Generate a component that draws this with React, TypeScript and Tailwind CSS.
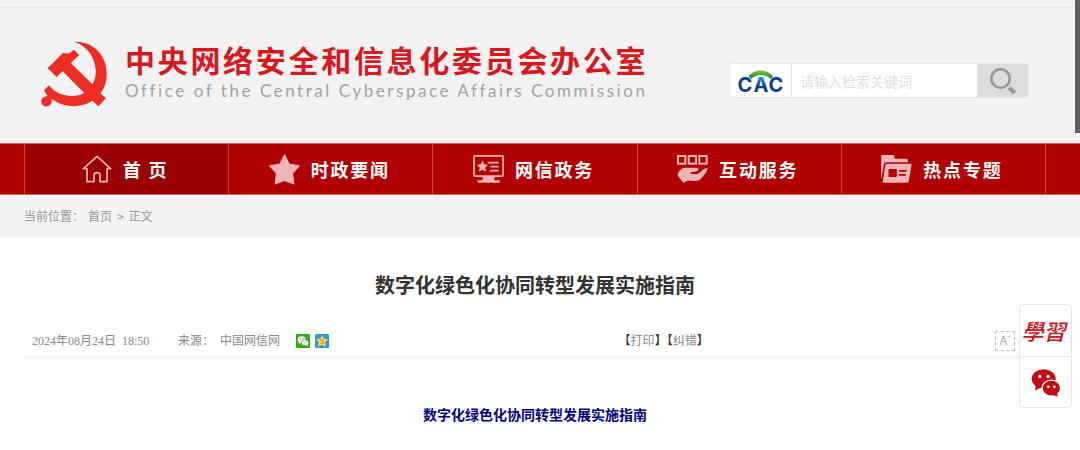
import React from 'react'

const navItems = [
  { label: '首 页', icon: HomeIcon, active: true },
  { label: '时政要闻', icon: StarIcon },
  { label: '网信政务', icon: ScreenIcon },
  { label: '互动服务', icon: HandIcon },
  { label: '热点专题', icon: FolderIcon },
]

function Emblem() {
  return (
    <svg viewBox="123 122 199 198" className="h-[66px] w-[66px] shrink-0 fill-[#ee2c24]" aria-hidden="true">
      <path d="M224 124C281 122 321 165 321 220C321 246 313 266 302 279L319 294L296 318L278 302C262 313 242 318 222 318C194 318 172 309 155 296C158 312 148 319 140 319C131 319 124 312 124 303C124 294 132 287 143 288L132 270L147 255C161 274 186 287 214 287C232 287 244 284 254 279L188 212L170 230L143 204L189 158C198 159 206 160 212 156L222 148L238 164L213 188L278 252C286 240 289 226 288 210C286 172 264 138 224 124Z" />
    </svg>
  )
}

function CacLogo() {
  return (
    <svg viewBox="0 0 46 32" className="h-8 w-[46px]" role="img" aria-label="CAC">
      <defs>
        <linearGradient id="roof" x1="0" y1="0" x2="0" y2="1">
          <stop offset="0" stopColor="#9cc52c" />
          <stop offset="0.8" stopColor="#0b9444" />
        </linearGradient>
        <linearGradient id="letter" x1="0" y1="0" x2="0" y2="1">
          <stop offset="0.2" stopColor="#0aa0d8" />
          <stop offset="0.5" stopColor="#0a3f8c" />
        </linearGradient>
      </defs>
      <path d="M10.500 11C16 3.500 29 3.500 35 11L33 14C28 8.500 18 8.500 13 14Z" fill="url(#roof)" />
      <g fontFamily="Inter, sans-serif" fontSize="20" fontWeight="700" textAnchor="middle" fill="#0a3f8c">
        <text x="7" y="27">C</text>
        <text x="23" y="27" fill="url(#letter)">A</text>
        <text x="38" y="27">C</text>
      </g>
    </svg>
  )
}

function SearchIcon() {
  return (
    <svg viewBox="812 203 82 82" className="h-7 w-7 stroke-[#989898]" fill="none" aria-hidden="true">
      <circle cx="846" cy="237" r="27" strokeWidth="8" />
      <path d="M871 264L887 278" strokeWidth="13" />
    </svg>
  )
}

function HomeIcon() {
  return (
    <svg viewBox="0 0 90 84" className="h-7 w-[30px]" fill="none" stroke="currentColor" strokeWidth="5" strokeLinejoin="round" aria-hidden="true">
      <path d="M45 4L4 41H15V80H36V60Q36 53 45 53Q54 53 54 60V80H75V41H86Z" />
    </svg>
  )
}

function StarIcon() {
  return (
    <svg viewBox="0 0 92 92" className="h-[31px] w-[31px]" fill="currentColor" stroke="currentColor" strokeWidth="3" strokeLinejoin="round" aria-hidden="true">
      <path d="M46 2L60 30L90 35L70 57L74 89L46 79L18 89L22 57L2 35L32 30Z" />
    </svg>
  )
}

function ScreenIcon() {
  return (
    <svg viewBox="0 0 92 84" className="h-7 w-[31px]" fill="currentColor" aria-hidden="true">
      <rect x="2.500" y="2.500" width="87" height="61" rx="3" fill="none" stroke="currentColor" strokeWidth="5" />
      <path d="M28 64H64V76H81Q81 83 76 83H16Q12 83 12 76H28Z" />
      <path d="M28 16L33 28L45 29L36 38L39 50L28 44L17 50L20 38L11 29L23 28Z" />
      <path d="M44 23H76M52 35H76M50 47H76" stroke="currentColor" strokeWidth="5" />
    </svg>
  )
}

function HandIcon() {
  return (
    <svg viewBox="0 0 93 84" className="h-7 w-[31px]" fill="currentColor" aria-hidden="true">
      <g fill="none" stroke="currentColor" strokeWidth="6">
        <rect x="3" y="3" width="22" height="23" />
        <rect x="35" y="3" width="22" height="23" />
        <rect x="67" y="3" width="22" height="23" />
      </g>
      <path d="M2 56C6 46 14 39 24 38H58C66 39 67 46 60 49L42 52C38 54 40 57 46 57H61C72 52 78 40 92 39C90 52 80 62 72 71C66 77 56 79 42 77C34 76 28 78 20 84L5 66Q1 61 2 56Z" />
    </svg>
  )
}

function FolderIcon() {
  return (
    <svg viewBox="0 0 92 84" className="h-7 w-[31px]" fill="currentColor" aria-hidden="true">
      <path d="M0 4Q0 0 4 0H35Q39 0 40 4L41 11H76Q80 11 80 15V22H18Q10 22 8 29L0 74Z" />
      <path fillRule="evenodd" d="M20 26H87Q92 26 91 31L83 77Q82 83 76 83H4L12 33Q13 26 20 26ZM25 42Q22 42 22 45V63Q22 66 25 66H44Q47 66 47 63V45Q47 42 44 42ZM54 45V50H76V45ZM53 57V62H74V57Z" />
    </svg>
  )
}

function WechatShareIcon() {
  return (
    <svg viewBox="0 0 42 42" className="h-[14px] w-[14px]" aria-hidden="true">
      <rect width="42" height="42" rx="4" fill="#34a91c" />
      <ellipse cx="17" cy="17" rx="12" ry="10" fill="#fff" />
      <path d="M9 23L8 30L16 26Z" fill="#fff" />
      <ellipse cx="27" cy="26" rx="11" ry="9" fill="#fff" stroke="#34a91c" strokeWidth="2" />
      <path d="M30 33L36 37L35 29Z" fill="#fff" />
      <g fill="#34a91c">
        <circle cx="13" cy="15" r="2" />
        <circle cx="21" cy="15" r="2" />
        <circle cx="24" cy="24" r="1.500" />
        <circle cx="31" cy="24" r="1.500" />
      </g>
    </svg>
  )
}

function QzoneIcon() {
  return (
    <svg viewBox="0 0 42 42" className="h-[14px] w-[14px]" aria-hidden="true">
      <rect width="42" height="42" rx="4" fill="#2f97dc" />
      <path d="M21 3L26 14L39 16L30 25L33 38L21 32L9 38L12 25L3 16L16 14Z" fill="#ffdf4a" />
      <path d="M14 18H27L17 27H29" fill="none" stroke="#d9820f" strokeWidth="3" />
    </svg>
  )
}

function WechatIcon() {
  return (
    <svg viewBox="210 230 90 86" className="h-[29px] w-[30px]" aria-hidden="true">
      <ellipse cx="248" cy="262" rx="36" ry="29" fill="#c40d12" />
      <path d="M224 280L222 297L242 287Z" fill="#c40d12" />
      <ellipse cx="271" cy="290" rx="28" ry="24" fill="#c40d12" stroke="#fff" strokeWidth="4" />
      <path d="M276 311L290 315L289 304Z" fill="#c40d12" />
      <g fill="#fff">
        <circle cx="236" cy="255" r="5" />
        <circle cx="261" cy="255" r="5" />
        <circle cx="262" cy="286" r="4" />
        <circle cx="280" cy="286" r="4" />
      </g>
    </svg>
  )
}

export default function App() {
  return (
    <div className="relative min-h-screen bg-white font-['Noto_Sans_CJK_SC',sans-serif] text-xs text-[#888]">
      <header className="bg-[#f2f2f2]">
        <div className="h-2 border-b border-[#e6e6e6]" />
        <div className="ml-6 mr-[34px] flex h-[135px] items-start justify-between px-[17px] pt-[33px]">
          <a href="#" className="flex gap-[18px]">
            <Emblem />
            <span className="mt-1.5 flex flex-col whitespace-nowrap">
              <span className="text-[30px] leading-6 font-bold tracking-[0.09em] text-[#d7191e]">
                中央网络安全和信息化委员会办公室
              </span>
              <span className="font-[Lato,sans-serif] text-[17px] leading-10 tracking-[0.15em] text-[#a3a3a3]">
                Office of the Central Cyberspace Affairs Commission
              </span>
            </span>
          </a>

          <form className="mt-[22px] flex h-[35px] w-[300px] overflow-hidden rounded-sm border border-[#e6e6e6] bg-white">
            <span className="flex w-[62px] shrink-0 items-center justify-center border-r border-[#e6e6e6]">
              <CacLogo />
            </span>
            <input
              type="text"
              aria-label="请输入检索关键词"
              placeholder="请输入检索关键词"
              className="min-w-0 flex-1 px-2 text-sm text-[#666] outline-none placeholder:text-[#dedede]"
            />
            <button type="button" aria-label="搜索" className="flex w-[51px] items-center justify-center bg-[#dcdcdc]">
              <SearchIcon />
            </button>
          </form>
        </div>
      </header>

      <nav className="border-y border-[#cf6366] bg-[#b00000]">
        <ul className="ml-6 mr-[34px] flex h-[50px] border-r border-[#c84444]">
          {navItems.map(({ label, icon: Icon, active }) => (
            <li key={label} className="flex-1 border-l border-[#c84444]">
              <a
                href="#"
                className={`flex h-full items-center justify-center gap-[11px] pr-[3px] text-[#eeb4b7] ${active ? 'bg-[#9b0000]' : ''}`}
              >
                <Icon />
                <span className="text-lg font-bold tracking-widest whitespace-nowrap text-white">{label}</span>
              </a>
            </li>
          ))}
        </ul>
      </nav>

      <div className="flex h-[42px] items-center bg-[#f2f2f2] pl-6 text-[#999]">
        <span>当前位置：</span>
        <a href="#" className="ml-1">首页</a>
        <span className="mx-[5px]">&gt;</span>
        <span>正文</span>
      </div>

      <main className="ml-6 mr-[34px]">
        <h1 className="mt-[34px] text-center text-xl leading-7 font-bold text-[#333]">
          数字化绿色化协同转型发展实施指南
        </h1>

        <div className="mt-[25px] flex h-[35px] items-center border-b-3 border-[#f3f3f3] pt-px pr-[31px] font-['Liberation_Serif','Noto_Sans_CJK_SC',serif]">
          <div className="flex w-[60%] items-center pl-2">
            <time className="w-[146px]">2024年08月24日&nbsp; 18:50</time>
            <span className="w-[42px]">来源：</span>
            <span>中国网信网</span>
            <a href="#" aria-label="微信" className="ml-4"><WechatShareIcon /></a>
            <a href="#" aria-label="QQ空间" className="ml-[5px]"><QzoneIcon /></a>
          </div>
          <div className="flex-1 text-[#333]">
            【<a href="#" className="text-[#888]">打印</a>】【<a href="#" className="text-[#888]">纠错</a>】
          </div>
          <button
            type="button"
            className="flex h-5 w-5 items-center justify-center border border-dashed border-[#bbb] font-['Noto_Sans',sans-serif] text-xs leading-4 text-[#aaa]"
          >
            A<sup>-</sup>
          </button>
        </div>

        <h2 className="mt-[45px] text-center text-sm leading-5 font-bold text-[#000080]">
          数字化绿色化协同转型发展实施指南
        </h2>
      </main>

      {/* floating shortcuts */}
      <aside className="absolute top-[304px] right-2 w-[53px] divide-y divide-[#e6e6e6] rounded-sm border border-[#e6e6e6] bg-white">
        <a
          href="#"
          className="flex h-[52px] items-center justify-center pr-1 font-['Noto_Sans_CJK_TC',sans-serif] text-[22px] font-medium text-[#c8161d] italic"
        >
          學習
        </a>
        <a href="#" aria-label="微信" className="flex h-[50px] items-center justify-center">
          <WechatIcon />
        </a>
      </aside>

      {/* scroll thumb */}
      <div className="absolute top-0 right-0 h-[133px] w-[5px] bg-[#5f5f5f]" />
    </div>
  )
}
